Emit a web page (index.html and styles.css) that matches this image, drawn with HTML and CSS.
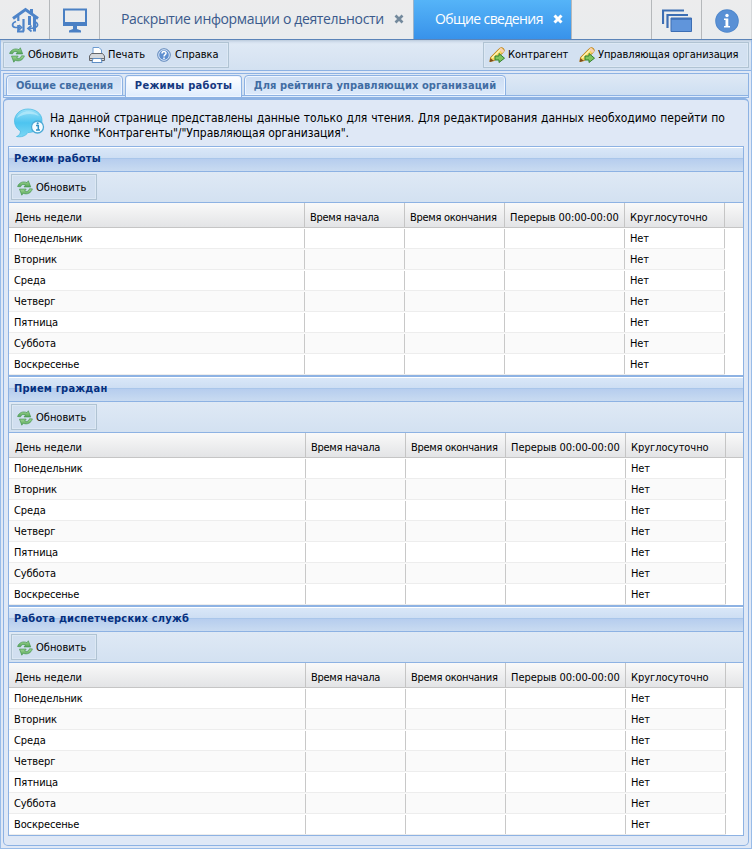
FILE: index.html
```
<!DOCTYPE html>
<html lang="ru">
<head>
<meta charset="utf-8">
<title>Общие сведения</title>
<link rel="stylesheet" href="styles.css">
</head>
<body>
<svg class="defs" width="0" height="0">
<defs>
<linearGradient id="gg" x1="0" y1="0" x2="0" y2="1"><stop offset="0" stop-color="#a2d894"/><stop offset="1" stop-color="#55a657"/></linearGradient>
<linearGradient id="bg" x1="0" y1="0" x2="0" y2="1"><stop offset="0" stop-color="#9be0f8"/><stop offset=".5" stop-color="#4dc4f0"/><stop offset="1" stop-color="#7ad6f4"/></linearGradient>
<symbol id="refresh" viewBox="0 0 16 16"><g fill="url(#gg)" stroke="#459350" stroke-width=".7" stroke-linejoin="round"><path d="M.6 6.500C2 2.500 6 .9 10 2.700L11.300.8 13.700 6.900 7 6.900 8.600 5C6 3.800 4.500 4.600 3.500 6.800Z"/><path d="M15.400 8.900C14 13.200 10 14.900 6.200 13.200L4.800 15.200 2.500 9.100 9.200 9.100 7.600 11C10.200 12.100 11.800 11 12.500 8.800Z"/></g></symbol>
<symbol id="pencil" viewBox="0 0 16 16"><path d="M.8 14.500 1.700 10.200 10.300 1.500Q12.500-.3 14.500 1.500 16 3.300 14.500 5.200L5.500 13.500Z" fill="#f5d45c" stroke="#b98126"/><path d="M3 11 11.500 2.500" stroke="#fff3b2" stroke-width="1.500"/><path d="M11 1.500 14.500 5" stroke="#f8cfae" stroke-width="2.500"/><path d="M.7 15 1.500 11.200 4.700 13.800Z" fill="#7b4b1b"/><path d="M6 9h4V6.500l5.500 4.700L10 15.500V13H6Z" fill="#7fc45e" stroke="#34822f"/></symbol>
</defs>
</svg>
<div class="app">
<header class="top">
<div class="tbtn"><svg width="28" height="26" viewBox="0 0 28 26"><g fill="none" stroke="#4e84c9"><path d="M2 11.500 14.500 2.500 27 11.500" stroke-width="3"/><path d="M20.500 2V7" stroke-width="3"/><path d="M7.300 9V14M7.300 18V24.500M12.500 12V24.500M6 24.500H13" stroke-width="2.200"/><path d="M18.500 9V18M23.500 10V24.500" stroke-width="3"/><path d="M5 14.500C.5 16 .5 20 4.500 20.500H9M8 18 10.500 20.500 8 23M25 15C28 18 27 21 18.500 21.500M20.500 18.500 17 21.500 20.500 24.500" stroke-width="1.700"/></g></svg></div>
<div class="tbtn"><svg width="28" height="26" viewBox="0 0 28 26"><path d="M3 2.500H25V17.500H3Z" fill="none" stroke="#4a80c4" stroke-width="2"/><path d="M2 15H26V19H2ZM12 18h4v4l4 1.500V25.500H8v-2l4-1.500Z" fill="#4a80c4"/></svg></div>
<div class="ttab"><span class="tt1">Раскрытие информации о деятельности</span><svg width="10" height="10" viewBox="0 0 10 10"><path d="M1.500 1.500 8.500 8.500M8.500 1.500 1.500 8.500" stroke="#73899c" stroke-width="2.700"/></svg></div>
<div class="ttab active"><span class="tt2">Общие сведения</span><svg width="10" height="10" viewBox="0 0 10 10"><path d="M1.500 1.500 8.500 8.500M8.500 1.500 1.500 8.500" stroke="#fff" stroke-width="3"/></svg></div>
<div class="fill"></div>
<div class="tbtn r"><svg width="30" height="24" viewBox="0 0 30 24"><path d="M1 15V1.500H22M5.500 19V6H26" fill="none" stroke="#3c6eb4" stroke-width="2.200"/><path d="M9 9H29.500V22.500H9Z" fill="#6095db" stroke="#3c6eb4"/><path d="M9 10H30" stroke="#3c6eb4" stroke-width="1.500"/></svg></div>
<div class="tbtn r last"><svg width="24" height="24" viewBox="0 0 24 24"><circle cx="12" cy="12" r="11.800" fill="#4e86cb"/><circle cx="12" cy="12" r="10.800" fill="#5990d5"/><path d="M9 9.500h4.300V17H15v1.500H9V17h1.500v-6H9Z" fill="#fff"/><circle cx="12" cy="6.500" r="1.700" fill="#fff"/></svg></div>
</header>
<div class="frame">
<div class="toolbar">
<div class="group">
<span class="btn b1"><svg width="16" height="16"><use href="#refresh"/></svg><b>Обновить</b></span>
<span class="btn b2"><svg width="16" height="16" viewBox="0 0 16 16"><path d="M4 8V.5h6L12.500 3V8" fill="#fff" stroke="#6d9bd0"/><path d="M2.500 6.500h11L15.500 9v4.500H.5V9Z" fill="#d5d8dc" stroke="#64676c"/><path d="M1 11.500h14" stroke="#6f7175"/><path d="M4 11.500h8l1 4H3Z" fill="#fff" stroke="#5e8ec5"/></svg><b>Печать</b></span>
<span class="btn b3"><svg width="14" height="14" viewBox="0 0 14 14"><circle cx="7" cy="7" r="6.300" fill="#5f8fd0" stroke="#6b8fbd"/><circle cx="7" cy="7" r="5.300" fill="none" stroke="#dbe8f8"/><path d="M5 5.500C5 3 9 3 9 5.300 9 6.700 7 6.700 7 8.500M7 9.500V11" fill="none" stroke="#fff" stroke-width="1.500"/></svg><b>Справка</b></span>
</div>
<div class="group">
<span class="btn b4"><svg width="16" height="16"><use href="#pencil"/></svg><b>Контрагент</b></span>
<span class="btn b5"><svg width="16" height="16"><use href="#pencil"/></svg><b>Управляющая организация</b></span>
</div>
</div>
<div class="tabs">
<div class="tab"><span>Общие сведения</span></div>
<div class="tab on"><span>Режимы работы</span></div>
<div class="tab"><span>Для рейтинга управляющих организаций</span></div>
</div>
<main class="panel">
<div class="note"><svg width="32" height="32" viewBox="0 0 32 32"><path d="M15 1C7 1 1.500 6.500 1.500 13c0 4.500 2.500 8 6 10 0 3-2 5-4 5.500 5 1 9-.5 11.500-4 8 0 14-5 14-12S22.500 1 15 1Z" fill="url(#bg)" stroke="#43b7e2" stroke-width=".7"/><path d="M4 10C7 2 21 1 26 8 20 5 11 5 4 10Z" fill="#c4effc" opacity=".6"/><circle cx="24.500" cy="19" r="6" fill="#f4fbff" stroke="#4aa9d6" stroke-width="1.300"/><path d="M23 17.500h2.300V22M23 22h4" fill="none" stroke="#318fc4" stroke-width="1.500"/><circle cx="24.700" cy="15.300" r="1.100" fill="#318fc4"/></svg>
<p><span class="n1">На данной странице представлены данные только для чтения. Для редактирования данных необходимо перейти по</span><br><span class="n2">кнопке "Контрагенты"/"Управляющая организация".</span></p></div>
<section class="grid first">
<h2>Режим работы</h2>
<div class="gbar"><span class="btn"><svg width="16" height="16"><use href="#refresh"/></svg><b>Обновить</b></span></div>
<table>
<tr><th>День недели</th><th>Время начала</th><th>Время окончания</th><th>Перерыв 00:00-00:00</th><th>Круглосуточно</th><th></th></tr>
<tr><td>Понедельник</td><td></td><td></td><td></td><td>Нет</td><td></td></tr>
<tr><td>Вторник</td><td></td><td></td><td></td><td>Нет</td><td></td></tr>
<tr><td>Среда</td><td></td><td></td><td></td><td>Нет</td><td></td></tr>
<tr><td>Четверг</td><td></td><td></td><td></td><td>Нет</td><td></td></tr>
<tr><td>Пятница</td><td></td><td></td><td></td><td>Нет</td><td></td></tr>
<tr><td>Суббота</td><td></td><td></td><td></td><td>Нет</td><td></td></tr>
<tr><td>Воскресенье</td><td></td><td></td><td></td><td>Нет</td><td></td></tr>
</table>
</section>
<section class="grid">
<h2>Прием граждан</h2>
<div class="gbar"><span class="btn"><svg width="16" height="16"><use href="#refresh"/></svg><b>Обновить</b></span></div>
<table>
<tr><th>День недели</th><th>Время начала</th><th>Время окончания</th><th>Перерыв 00:00-00:00</th><th>Круглосуточно</th><th></th></tr>
<tr><td>Понедельник</td><td></td><td></td><td></td><td>Нет</td><td></td></tr>
<tr><td>Вторник</td><td></td><td></td><td></td><td>Нет</td><td></td></tr>
<tr><td>Среда</td><td></td><td></td><td></td><td>Нет</td><td></td></tr>
<tr><td>Четверг</td><td></td><td></td><td></td><td>Нет</td><td></td></tr>
<tr><td>Пятница</td><td></td><td></td><td></td><td>Нет</td><td></td></tr>
<tr><td>Суббота</td><td></td><td></td><td></td><td>Нет</td><td></td></tr>
<tr><td>Воскресенье</td><td></td><td></td><td></td><td>Нет</td><td></td></tr>
</table>
</section>
<section class="grid">
<h2>Работа диспетчерских служб</h2>
<div class="gbar"><span class="btn"><svg width="16" height="16"><use href="#refresh"/></svg><b>Обновить</b></span></div>
<table>
<tr><th>День недели</th><th>Время начала</th><th>Время окончания</th><th>Перерыв 00:00-00:00</th><th>Круглосуточно</th><th></th></tr>
<tr><td>Понедельник</td><td></td><td></td><td></td><td>Нет</td><td></td></tr>
<tr><td>Вторник</td><td></td><td></td><td></td><td>Нет</td><td></td></tr>
<tr><td>Среда</td><td></td><td></td><td></td><td>Нет</td><td></td></tr>
<tr><td>Четверг</td><td></td><td></td><td></td><td>Нет</td><td></td></tr>
<tr><td>Пятница</td><td></td><td></td><td></td><td>Нет</td><td></td></tr>
<tr><td>Суббота</td><td></td><td></td><td></td><td>Нет</td><td></td></tr>
<tr><td>Воскресенье</td><td></td><td></td><td></td><td>Нет</td><td></td></tr>
</table>
</section>
</main>
</div>
</div>
</body>
</html>
```
FILE: styles.css
```
* { box-sizing: border-box; }
body { margin: 0; font: 11px/14px "DejaVu Sans Condensed", "DejaVu Sans", sans-serif; color: #000; }
svg { display: block; flex: none; }
.defs { position: absolute; }
.app { width: 752px; height: 849px; display: flex; flex-direction: column; background: #dfe8f6; overflow: hidden; }
.frame { flex: 1; display: flex; flex-direction: column; border: 1px solid #99bce8; border-top: 0; }
span { white-space: nowrap; }

.top { height: 40px; flex: none; display: flex; background: linear-gradient(#ececed, #e9ecee); border-bottom: 1px solid #5b84b8; }
.tbtn { width: 50px; border-right: 1px solid #b5b8bb; display: flex; justify-content: center; align-items: center; }
.tbtn.r { border-right: 0; border-left: 1px solid #b5b8bb; padding-top: 2px; }
.tbtn.last { width: 51px; border-right: 1px solid #d3d6d9; }
.ttab { width: 313px; display: flex; align-items: center; padding: 0 9px 1px 21px; justify-content: space-between; font: 14px/20px "Open Sans", sans-serif; color: #3a5a8c; }
.ttab.active { width: 158px; padding-right: 8px; color: #fff; background: linear-gradient(#55b4f8, #3892ea); border-left: 1px solid #9bb4cc; }
.fill { flex: 1; border-left: 1px solid #b5b8bb; }
.tt1 { letter-spacing: -.36px; }
.tt2 { letter-spacing: -.6px; }

.toolbar { height: 31px; flex: none; display: flex; justify-content: space-between; padding: 2px 2px 0; border-bottom: 1px solid #8db2e3; background: linear-gradient(#bccbdc, #d3dfee 2px, #dfe9f5 4px, #d3e1f1); }
.group { height: 26px; display: flex; align-items: center; border: 1px solid #b0c3d3; box-shadow: inset 0 0 0 1px #dce8f4; background: #d3e1f1; }
.group:first-child { width: 226px; }
.group:last-child { width: 266px; }
.btn { display: flex; align-items: center; gap: 3px; }
.btn b { font-weight: 400; white-space: nowrap; }
.b1 { width: 80px; padding-left: 5px; }
.b2 { width: 69px; padding-left: 5px; }
.b3 { padding-left: 4px; gap: 4px; }
.b4 { width: 90px; padding-left: 5px; letter-spacing: -.1px; }
.b5 { padding-left: 5px; letter-spacing: -.1px; }

.tabs { height: 25px; flex: none; margin: 2px 2px 0; display: flex; align-items: flex-end; gap: 2px; padding: 0 2px 1px; border: 1px solid #8db2e3; background: linear-gradient(#8db2e3, #8db2e3) 0 21px / 100% 1px no-repeat, linear-gradient(#dfe9f5, #cedff2 21px, #deecfd 22px); }
.tab { height: 21px; border: 1px solid #8db2e3; border-radius: 4px 4px 0 0; box-shadow: inset 0 0 0 1px #eef5ff; background: linear-gradient(#ccddf3, #dce9fa); text-align: center; font: bold 11px/20px "DejaVu Sans Condensed", sans-serif; color: #416da3; width: 117px; }
.tab.on { height: 22px; margin-bottom: -1px; letter-spacing: .3px; color: #15387f; background: linear-gradient(#fff, #deecfd); border-bottom: 0; }
.tab:last-child { width: 262px; letter-spacing: .1px; }

.panel { flex: none; height: 748px; margin: 0 2px; padding: 0 4px; border: 1px solid #8db2e3; border-top-width: 2px; border-radius: 5px; }
.note { height: 46px; display: flex; padding: 8px 0 0 5px; }
.note p { margin: 3px 0 0 5px; font: 12px/15px "DejaVu Sans Condensed", sans-serif; letter-spacing: -.06px; }
.n1 { word-spacing: .57px; }

.grid { width: 736px; height: 230px; border: 1px solid #8db2e3; background: #fff; }
.grid h2 { margin: 0; height: 25px; padding-left: 5px; font: bold 11px/24px "DejaVu Sans Condensed", sans-serif; letter-spacing: .2px; color: #05307f; border-bottom: 1px solid #8db2e3; background: linear-gradient(#fff 1px, #d9e7f8 1px, #cddef3 11px, #a9c6ea 11px, #a9c6ea 12px, #b6cdee 12px, #c9dbf1 24px); }
.gbar { height: 31px; padding: 2px; border-bottom: 1px solid #8db2e3; background: linear-gradient(#dfe9f5, #d3e1f1); }
.gbar .btn { width: 86px; height: 26px; padding: 1px 0 0 5px; border: 1px solid #b0c3d3; box-shadow: inset 0 0 0 1px #dce8f4; background: #d1dff0; }
table { width: 734px; table-layout: fixed; border-spacing: 0; }
th, td { height: 21px; padding: 1px 5px 0; text-align: left; font-weight: 400; line-height: 14px; letter-spacing: -.12px; border-bottom: 1px solid #ededed; white-space: nowrap; overflow: hidden; background: linear-gradient(#c8c8c8, #c8c8c8) right bottom / 1px 19px no-repeat; }
th { height: 25px; padding: 5px 0 0 5px; letter-spacing: -.05px; border-bottom-color: #c5c5c5; border-right: 1px solid #c5c5c5; background: linear-gradient(#f9f9f9, #e3e4e6); }
th:first-child { padding-left: 6px; }
th:last-child { border-right: 0; }
td:last-child { border-color: #fff; background: #fff; }
tr:nth-child(odd) td:not(:last-child) { background-color: #fafafa; }
th:nth-child(1) { width: 297px; }
.first th:nth-child(1) { width: 296px; }
th:nth-child(2), th:nth-child(3), th:nth-child(5) { width: 100px; }
th:nth-child(2), th:nth-child(3) { letter-spacing: -.3px; }
th:nth-child(4) { width: 120px; }
```
